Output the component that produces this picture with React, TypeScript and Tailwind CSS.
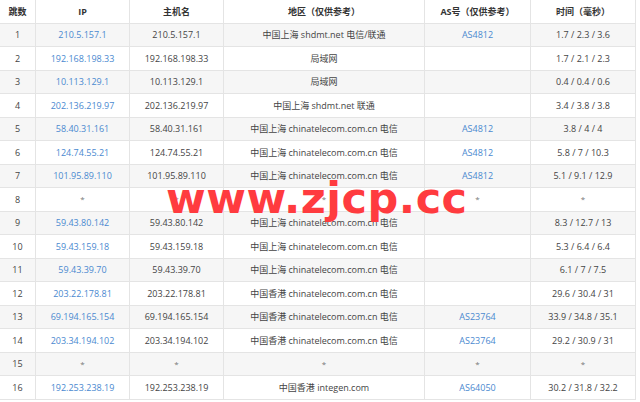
import React from "react";

type Row = [string, string, string, string, string, string];

const rows: Row[] = [
  ["1", "210.5.157.1", "210.5.157.1", "中国上海 shdmt.net 电信/联通", "AS4812", "1.7 / 2.3 / 3.6"],
  ["2", "192.168.198.33", "192.168.198.33", "局域网", "", "1.7 / 2.1 / 2.3"],
  ["3", "10.113.129.1", "10.113.129.1", "局域网", "", "0.4 / 0.4 / 0.6"],
  ["4", "202.136.219.97", "202.136.219.97", "中国上海 shdmt.net 联通", "", "3.4 / 3.8 / 3.8"],
  ["5", "58.40.31.161", "58.40.31.161", "中国上海 chinatelecom.com.cn 电信", "AS4812", "3.8 / 4 / 4"],
  ["6", "124.74.55.21", "124.74.55.21", "中国上海 chinatelecom.com.cn 电信", "AS4812", "5.8 / 7 / 10.3"],
  ["7", "101.95.89.110", "101.95.89.110", "中国上海 chinatelecom.com.cn 电信", "AS4812", "5.1 / 9.1 / 12.9"],
  ["8", "*", "*", "*", "*", "*"],
  ["9", "59.43.80.142", "59.43.80.142", "中国上海 chinatelecom.com.cn 电信", "", "8.3 / 12.7 / 13"],
  ["10", "59.43.159.18", "59.43.159.18", "中国上海 chinatelecom.com.cn 电信", "", "5.3 / 6.4 / 6.4"],
  ["11", "59.43.39.70", "59.43.39.70", "中国上海 chinatelecom.com.cn 电信", "", "6.1 / 7 / 7.5"],
  ["12", "203.22.178.81", "203.22.178.81", "中国香港 chinatelecom.com.cn 电信", "", "29.6 / 30.4 / 31"],
  ["13", "69.194.165.154", "69.194.165.154", "中国香港 chinatelecom.com.cn 电信", "AS23764", "33.9 / 34.8 / 35.1"],
  ["14", "203.34.194.102", "203.34.194.102", "中国香港 chinatelecom.com.cn 电信", "AS23764", "29.2 / 30.9 / 31"],
  ["15", "*", "*", "*", "*", "*"],
  ["16", "192.253.238.19", "192.253.238.19", "中国香港 integen.com", "AS64050", "30.2 / 31.8 / 32.2"],
];

const headers = ["跳数", "IP", "主机名", "地区（仅供参考）", "AS号（仅供参考）", "时间（毫秒）"];

const cell =
  "h-[23.5px] flex items-center justify-center border-r border-b border-[#e4e4e4] whitespace-nowrap overflow-hidden";

export default function App() {
  return (
    <div
      className="relative w-[640px] h-[402px] bg-white overflow-hidden"
      style={{ fontFamily: '"Open Sans", "Noto Sans CJK SC", sans-serif' }}
    >
      <div className="grid grid-cols-[36px_94px_94px_201px_106px_105px] w-[636px] text-[9px] text-[#444]">
        {headers.map((h, i) => (
          <div key={i} className={`${cell} font-bold text-[#333] bg-white`}>
            {h}
          </div>
        ))}
        {rows.map((r, ri) => {
          const bg = ri % 2 === 0 ? "bg-[#f6f6f6]" : "bg-white";
          return r.map((c, ci) => {
            const star = c === "*";
            const blue = !star && (ci === 1 || ci === 4);
            return (
              <div
                key={`${ri}-${ci}`}
                className={`${cell} ${bg} ${blue ? "text-[#4a89d0]" : ""} ${star ? "text-[#777] text-[8px]" : ""}`}
              >
                {c}
              </div>
            );
          });
        })}
      </div>
      <div
        className="absolute left-[166px] top-[177px] text-[43px] tracking-[0.5px] font-bold leading-none text-[#ff3b3f] whitespace-nowrap"
        style={{ fontFamily: '"DejaVu Sans", sans-serif' }}
      >
        www.zjcp.cc
      </div>
    </div>
  );
}
